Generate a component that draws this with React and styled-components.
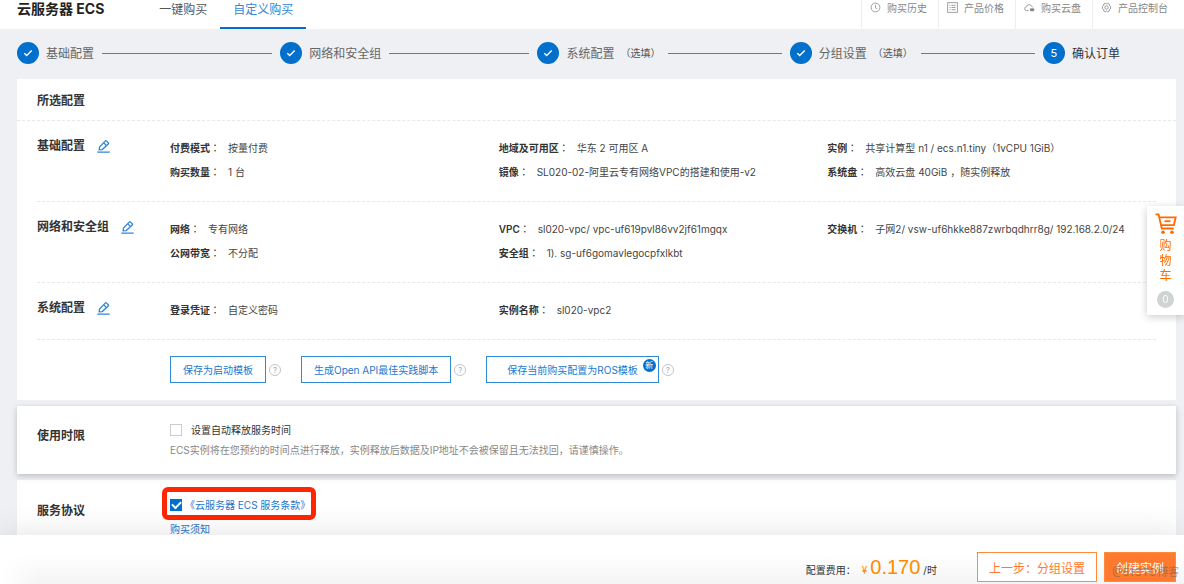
import styled, { createGlobalStyle } from 'styled-components';

const GlobalStyle = createGlobalStyle`
  * {
    box-sizing: border-box;
  }

  body {
    margin: 0;
    color: #333;
    font-family: Inter, "Noto Sans CJK SC", sans-serif;
    font-size: 10px;
    line-height: 24px;
  }

  button, input {
    margin: 0;
    font-family: inherit;
  }

  a {
    text-decoration: none;
  }
`;

const steps = [
  { label: '基础配置', done: true },
  { label: '网络和安全组', done: true },
  { label: '系统配置', optional: true, done: true },
  { label: '分组设置', optional: true, done: true },
  { label: '确认订单' },
];

const sections = [
  {
    title: '基础配置',
    columns: [
      [['付费模式', '按量付费'], ['购买数量', '1 台']],
      [['地域及可用区', '华东 2 可用区 A'], ['镜像', 'SL020-02-阿里云专有网络VPC的搭建和使用-v2']],
      [['实例', '共享计算型 n1 / ecs.n1.tiny（1vCPU 1GiB）'], ['系统盘', '高效云盘 40GiB ，随实例释放']],
    ],
  },
  {
    title: '网络和安全组',
    columns: [
      [['网络', '专有网络'], ['公网带宽', '不分配']],
      [['VPC', 'sl020-vpc/ vpc-uf619pvl86vv2jf61mgqx'], ['安全组', '1). sg-uf6gomavlegocpfxlkbt']],
      [['交换机', '子网2/ vsw-uf6hkke887zwrbqdhrr8g/ 192.168.2.0/24']],
    ],
  },
  {
    title: '系统配置',
    columns: [
      [['登录凭证', '自定义密码']],
      [['实例名称', 'sl020-vpc2']],
      [],
    ],
  },
];

const ClockIcon = () => (
  <LinkIcon viewBox="0 0 11 11">
    <circle cx="5.5" cy="5.5" r="4.4" />
    <path d="M5.5 2.8v3l1.8 1" />
  </LinkIcon>
);

const PriceIcon = () => (
  <LinkIcon viewBox="0 0 11 11">
    <rect x="0.7" y="0.7" width="9.6" height="9.6" />
    <path d="M2.5 3.3h1M2.5 5.5h1M2.5 7.7h1M4.5 3.3h4M4.5 5.5h4M4.5 7.7h4" />
  </LinkIcon>
);

const CloudIcon = () => (
  <LinkIcon viewBox="0 0 11 11">
    <path d="M4.6 8.6H2.7a1.9 1.9 0 0 1-.2-3.8 2.7 2.7 0 0 1 5.2-.4 2 2 0 0 1 1.3.9" />
    <path d="M6.4 6.8h3.4v2H6.4z" fill="#777" />
  </LinkIcon>
);

const ConsoleIcon = () => (
  <LinkIcon viewBox="0 0 11 11">
    <path d="M4.2 1.2l1.3.6 1.3-.6 1.4.8.1 1.4 1.3.9v2.4l-1.3.9-.1 1.4-1.4.8-1.3-.6-1.3.6L2.8 9l-.1-1.4-1.3-.9V4.3l1.3-.9.1-1.4z" />
    <circle cx="5.5" cy="5.5" r="1.7" />
  </LinkIcon>
);

const links = [
  { label: '购买历史', Icon: ClockIcon },
  { label: '产品价格', Icon: PriceIcon },
  { label: '购买云盘', Icon: CloudIcon },
  { label: '产品控制台', Icon: ConsoleIcon },
];

function App() {
  const renderSection = ({ title, columns }) => (
    <Section key={title}>
      <SectionTitle>
        {title}
        <EditButton aria-label={`编辑${title}`}>
          <EditIcon viewBox="0 0 13 13">
            <path d="M2.2 9.9l.3-2.9L8.2 1.1a1 1 0 0 1 1.4 0l1.6 1.6a1 1 0 0 1 0 1.4L5.3 9.6z" />
            <path d="M6.7 2.8l2.8 2.8M0.3 12.2h12.4" />
          </EditIcon>
        </EditButton>
      </SectionTitle>
      <Columns>
        {columns.map((items, index) => (
          <Details key={index}>
            {items.map(([name, value]) => (
              <Detail key={name}>
                <Name>{name}</Name>
                <Colon>：</Colon>
                <Value>{value}</Value>
              </Detail>
            ))}
          </Details>
        ))}
      </Columns>
    </Section>
  );

  return (
    <Wrapper>
      <GlobalStyle />
      <Header>
        <Logo>云服务器 ECS</Logo>
        <Tabs>
          <Tab href="#quick">一键购买</Tab>
          <Tab href="#custom" $active>自定义购买</Tab>
        </Tabs>
        <Links>
          {links.map(({ label, Icon }) => (
            <HeaderLink key={label} href="#">
              <Icon />
              {label}
            </HeaderLink>
          ))}
        </Links>
      </Header>

      <Content>
        <Steps>
          {steps.map(({ label, optional, done }, index) => (
            <Step key={label}>
              <StepMark>
                {done ? (
                  <TickIcon viewBox="0 0 10 10">
                    <path d="M1.3 5.2l2.4 2.4 5-5" />
                  </TickIcon>
                ) : index + 1}
              </StepMark>
              <StepLabel $current={!done}>{label}</StepLabel>
              {optional && <Optional>（选填）</Optional>}
              {done && <StepLine />}
            </Step>
          ))}
        </Steps>

        <Panel>
          <PanelTitle>所选配置</PanelTitle>
          <PanelBody>
            {sections.map(renderSection)}
            <Actions>
              <Action>
                <OutlineButton>保存为启动模板</OutlineButton>
                <Help aria-label="帮助">?</Help>
              </Action>
              <Action>
                <OutlineButton>生成Open API最佳实践脚本</OutlineButton>
                <Help aria-label="帮助">?</Help>
              </Action>
              <Action>
                <OutlineButton $wide>
                  保存当前购买配置为ROS模板
                  <NewBadge>新</NewBadge>
                </OutlineButton>
                <Help aria-label="帮助">?</Help>
              </Action>
            </Actions>
          </PanelBody>
        </Panel>

        <RaisedPanel>
          <SectionTitle>使用时限</SectionTitle>
          <div>
            <CheckLabel>
              <Checkbox type="checkbox" />
              设置自动释放服务时间
            </CheckLabel>
            <Hint>ECS实例将在您预约的时间点进行释放，实例释放后数据及IP地址不会被保留且无法找回，请谨慎操作。</Hint>
          </div>
        </RaisedPanel>

        <TermsPanel>
          <SectionTitle>服务协议</SectionTitle>
          <div>
            <Terms>
              <Checkbox type="checkbox" id="terms" aria-label="云服务器 ECS 服务条款" defaultChecked />
              <TextLink href="#terms">《云服务器 ECS 服务条款》</TextLink>
              <Highlight />
            </Terms>
            <TextLink href="#notice">购买须知</TextLink>
          </div>
        </TermsPanel>
      </Content>

      <Footer>
        <Price>
          配置费用：
          <Currency>¥</Currency>
          <Amount>0.170</Amount>
          /时
        </Price>
        <FooterButton>上一步：分组设置</FooterButton>
        <FooterButton $primary>创建实例</FooterButton>
        <Watermark>@51CTO博客</Watermark>
      </Footer>

      <Cart>
        <CartIcon viewBox="0 0 22 22">
          <path d="M0.5 1.3h3l3.300 14.200h12M4.500 4.300h16.200l-1.800 7.900H6.400" />
          <path d="M9.500 8.200h6" />
          <circle cx="8" cy="19.300" r="1.800" />
          <circle cx="17" cy="19.300" r="1.800" />
        </CartIcon>
        <CartText>购物车</CartText>
        <CartCount>0</CartCount>
      </Cart>
    </Wrapper>
  );
}

const Wrapper = styled.div`
  height: 100vh;
  display: flex;
  flex-direction: column;
  overflow: hidden;
  background: #eff0f4;
`;

const Header = styled.header`
  flex: none;
  display: flex;
  height: 29px;
  padding-left: 17px;
  background: white;
  line-height: 18px;
`;

const Logo = styled.div`
  font-size: 14px;
  font-weight: 700;
  color: #222;
`;

const Tabs = styled.nav`
  display: flex;
  margin-left: 42px;
`;

const Tab = styled.a`
  padding: 0 13px;
  border-bottom: 2px solid ${({ $active }) => ($active ? '#0070cc' : 'transparent')};
  color: ${({ $active }) => ($active ? '#3385d6' : '#555')};
  font-size: 12px;
  line-height: 20px;
`;

const Links = styled.nav`
  display: flex;
  margin-left: auto;
  padding-right: 5px;
`;

const HeaderLink = styled.a`
  display: flex;
  gap: 6px;
  padding: 0 11px 0 8px;
  border-left: 1px solid #eee;
  color: #888;
  line-height: 16px;
`;

const LinkIcon = styled.svg`
  width: 11px;
  height: 11px;
  margin-top: 2px;
  fill: none;
  stroke: #888;
  stroke-width: 0.8;
`;

const Content = styled.main`
  flex: 1;
  min-height: 0;
  display: flex;
  flex-direction: column;
  gap: 6px;
  padding: 0 8px 0 17px;
  overflow-y: auto;
  scrollbar-width: none;
`;

const Steps = styled.div`
  flex: none;
  display: grid;
  grid-template-columns: 263fr 257fr 252fr 253fr 133fr;
  height: 44px;
  padding-top: 13px;
`;

const Step = styled.div`
  display: flex;
  align-items: center;
  height: 22px;
`;

const StepMark = styled.div`
  flex: none;
  display: flex;
  align-items: center;
  justify-content: center;
  width: 22px;
  height: 22px;
  margin-right: 7px;
  border-radius: 50%;
  background: #0070cc;
  color: white;
  font-size: 11px;
`;

const TickIcon = styled.svg`
  width: 10px;
  height: 10px;
  fill: none;
  stroke: white;
  stroke-width: 1.4;
`;

const StepLabel = styled.div`
  padding-top: 1px;
  color: ${({ $current }) => ($current ? '#333' : '#666')};
  font-size: 12px;
  white-space: nowrap;
`;

const Optional = styled.div`
  margin-left: 6px;
  color: #555;
  white-space: nowrap;
`;

const StepLine = styled.div`
  flex: 1;
  height: 1px;
  margin: 0 8px;
  background: #2f8ada;
`;

const Panel = styled.section`
  flex: none;
  background: white;
`;

const PanelTitle = styled.h2`
  margin: 0;
  padding: 11px 20px 9px;
  border-bottom: 1px dashed #e8e8e8;
  font-size: 12px;
  font-weight: 600;
  line-height: 21px;
`;

const PanelBody = styled.div`
  padding: 0 20px;
`;

const Section = styled.div`
  display: grid;
  grid-template-columns: 133px 1fr;
  padding: 15px 0 17px;
  border-bottom: 1px dashed #e8e8e8;
`;

const SectionTitle = styled.h3`
  display: flex;
  align-items: center;
  height: 20px;
  margin: 0;
  font-size: 12px;
  font-weight: 600;
  line-height: 20px;
`;

const EditButton = styled.button`
  display: flex;
  margin-left: 12px;
  padding: 0;
  border: none;
  background: none;
  cursor: pointer;
`;

const EditIcon = styled.svg`
  width: 13px;
  height: 13px;
  fill: none;
  stroke: #2f86da;
  stroke-width: 1.3;
`;

const Columns = styled.div`
  display: grid;
  grid-template-columns: repeat(3, 1fr);
`;

const Details = styled.dl`
  margin: 0;
`;

const Detail = styled.div`
  display: flex;
  white-space: nowrap;
`;

const Name = styled.dt`
  font-weight: 600;
`;

const Colon = styled.span`
  font-family: "Noto Sans CJK TC", sans-serif;
`;

const Value = styled.dd`
  margin: 0 0 0 8px;
  color: #444;
`;

const Actions = styled.div`
  display: flex;
  gap: 20px;
  padding: 16px 0 17px 133px;
`;

const Action = styled.div`
  display: flex;
  align-items: center;
  gap: 3px;
`;

const OutlineButton = styled.button`
  position: relative;
  height: 27px;
  padding: 0 ${({ $wide }) => ($wide ? '20px' : '12px')};
  border: 1px solid #2f8ada;
  background: white;
  color: #1a78d0;
  font-size: 10px;
`;

const NewBadge = styled.span`
  position: absolute;
  top: 2px;
  right: 2px;
  width: 13px;
  height: 13px;
  border-radius: 50%;
  background: #0070cc;
  color: white;
  font-size: 8px;
  line-height: 13px;
`;

const Help = styled.button`
  width: 12px;
  height: 12px;
  padding: 0;
  border: 1px solid #c4c4c4;
  border-radius: 50%;
  background: none;
  color: #aaa;
  font-size: 8px;
  line-height: 10px;
`;

const RaisedPanel = styled.section`
  position: relative;
  flex: none;
  display: grid;
  grid-template-columns: 133px 1fr;
  align-items: start;
  padding: 14px 20px;
  background: white;
  box-shadow: 0 2px 6px rgba(0, 0, 0, 0.22);

  ${SectionTitle} {
    margin-top: 6px;
  }
`;

const CheckLabel = styled.label`
  display: flex;
  align-items: center;
  gap: 9px;
  line-height: 20px;
`;

const Checkbox = styled.input`
  appearance: none;
  display: flex;
  align-items: center;
  justify-content: center;
  width: 12px;
  height: 12px;
  border: 1px solid #ccc;
  background: white;

  &:checked {
    border-color: #0070cc;
    background: #0070cc;
  }

  &:checked::after {
    content: '';
    width: 7px;
    height: 4px;
    margin-bottom: 2px;
    border-left: 2px solid white;
    border-bottom: 2px solid white;
    transform: rotate(-45deg);
  }
`;

const Hint = styled.p`
  margin: 0;
  color: #888;
  line-height: 20px;
`;

const TermsPanel = styled.section`
  flex: none;
  display: grid;
  grid-template-columns: 133px 1fr;
  align-items: start;
  padding: 13px 20px;
  background: white;

  ${SectionTitle} {
    margin-top: 8px;
  }
`;

const Terms = styled.div`
  position: relative;
  display: flex;
  align-items: center;
  gap: 3px;
  width: fit-content;
`;

const TextLink = styled.a`
  color: #1a78d0;
`;

const Highlight = styled.div`
  position: absolute;
  inset: -6px -6px -3px -8px;
  border: 5px solid #ff2600;
  border-radius: 6px;
  pointer-events: none;
`;

const Footer = styled.footer`
  position: relative;
  flex: none;
  display: flex;
  align-items: center;
  height: 49px;
  padding: 15px 8px 0 0;
  background:
    linear-gradient(to right, white, transparent 40px),
    linear-gradient(white 40%, #f4f4f4);
  box-shadow: 0 0 32px rgba(0, 0, 0, 0.12);
`;

const Price = styled.div`
  display: flex;
  align-items: baseline;
  margin-left: auto;
  margin-right: 33px;
  padding-top: 3px;
`;

const Currency = styled.span`
  margin-left: 6px;
  color: #ff8a00;
`;

const Amount = styled.span`
  margin: 0 3px;
  color: #ff8a00;
  font-family: "Liberation Sans", sans-serif;
  font-size: 20px;
`;

const FooterButton = styled.button`
  height: 30px;
  margin-left: 7px;
  padding: 0 11px;
  border: 1px solid #ff8a3c;
  background: ${({ $primary }) => ($primary ? '#ff7a2e' : 'white')};
  color: ${({ $primary }) => ($primary ? 'white' : '#ff7a2e')};
  font-size: 12px;
`;

const Watermark = styled.div`
  position: absolute;
  right: 5px;
  bottom: 2px;
  color: rgba(110, 100, 95, 0.6);
  font-size: 11px;
  line-height: 20px;
  pointer-events: none;
`;

const Cart = styled.aside`
  position: fixed;
  top: 206px;
  right: 0;
  display: flex;
  flex-direction: column;
  align-items: center;
  width: 37px;
  padding: 7px 0;
  background: white;
  box-shadow: 0 2px 8px rgba(0, 0, 0, 0.2);
`;

const CartIcon = styled.svg`
  width: 22px;
  height: 22px;
  fill: none;
  stroke: #ff6a00;
  stroke-width: 1.8;

  circle {
    fill: #ff6a00;
    stroke: none;
  }
`;

const CartText = styled.div`
  width: 12px;
  margin-top: 3px;
  color: #ff6a00;
  font-size: 12px;
  line-height: 15px;
`;

const CartCount = styled.div`
  width: 17px;
  height: 17px;
  margin-top: 8px;
  border-radius: 50%;
  background: #d0d3d3;
  color: white;
  line-height: 17px;
  text-align: center;
`;

export default App;
